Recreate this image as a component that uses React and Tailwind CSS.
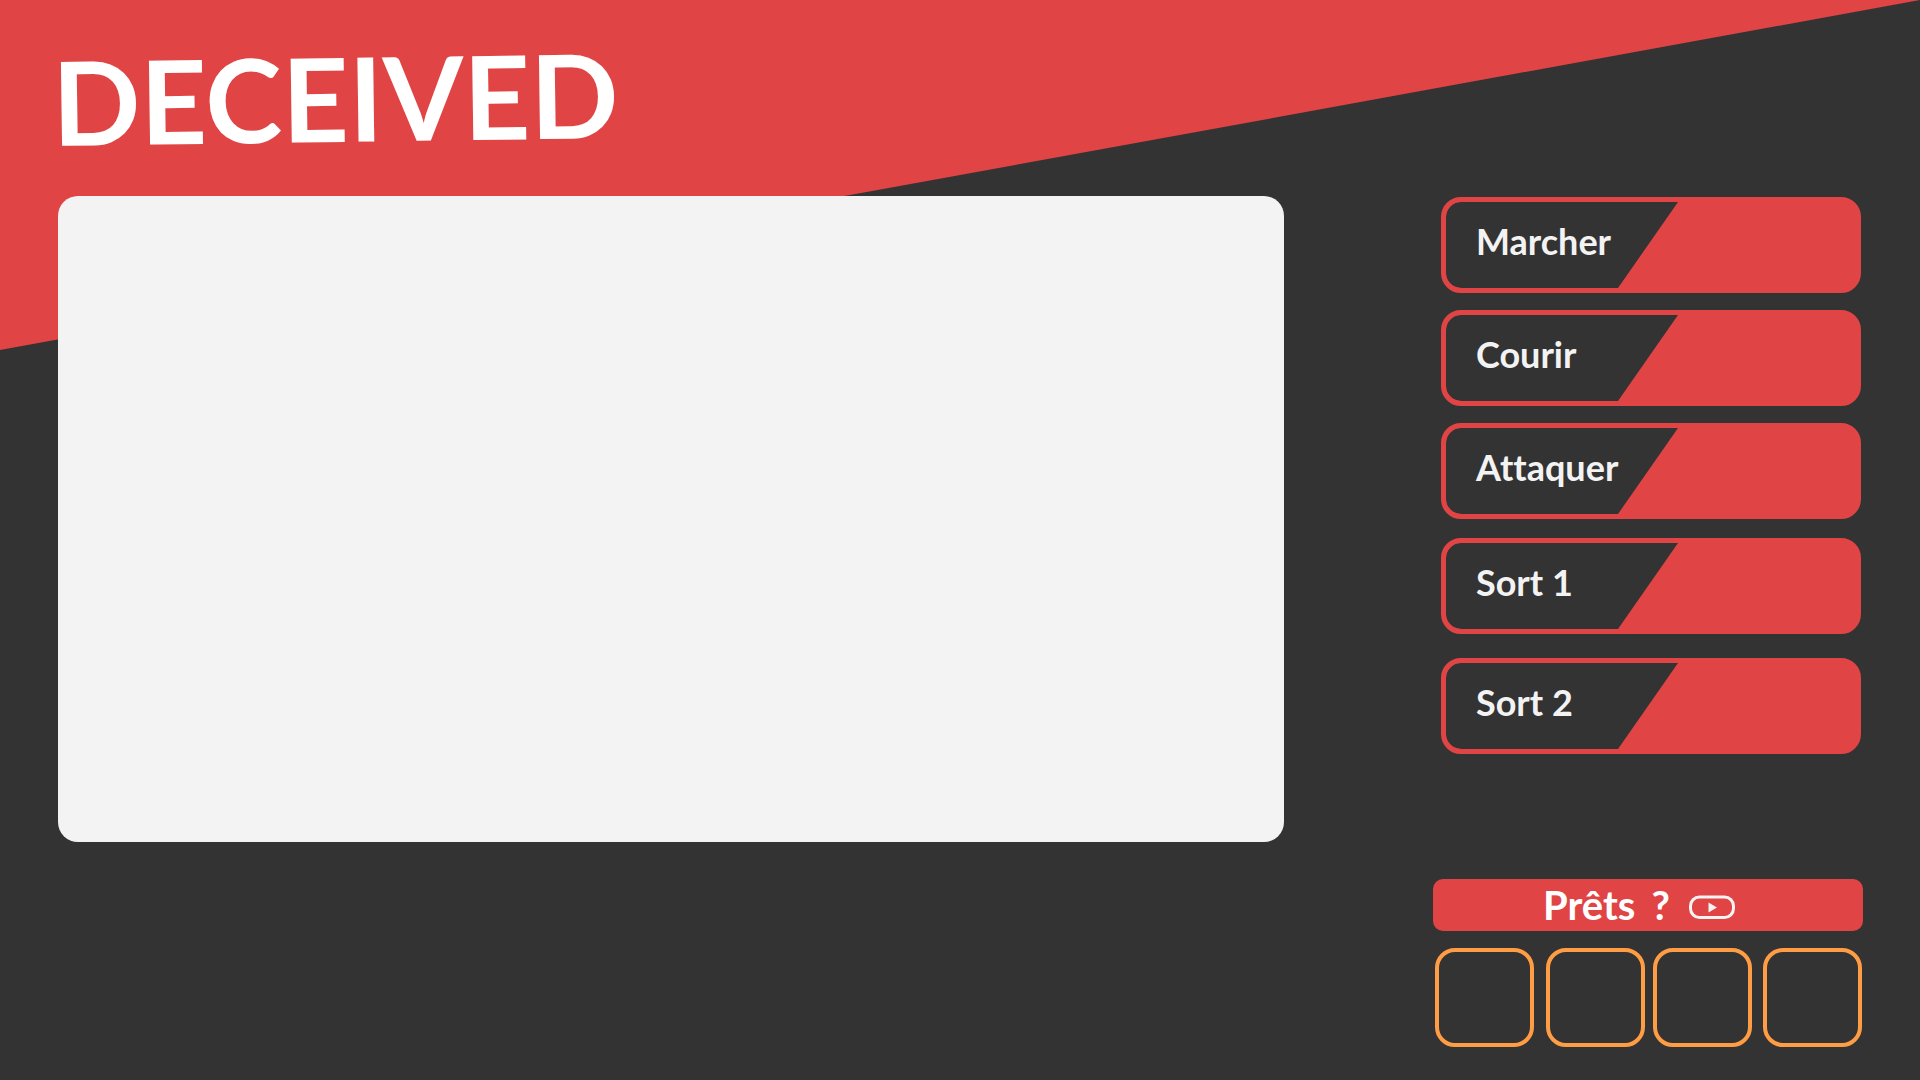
const actions = [
  { label: "Marcher", gap: "" },
  { label: "Courir", gap: "mt-[17px]" },
  { label: "Attaquer", gap: "mt-[17px]" },
  { label: "Sort 1", gap: "mt-[19px]" },
  { label: "Sort 2", gap: "mt-6" },
];

function ActionButton({ label, gap }) {
  return (
    <button
      type="button"
      className={`flex h-24 w-full overflow-hidden rounded-[20px] border-[5px] border-[#e04444] bg-[#e04444] text-left ${gap}`}
    >
      <span className="flex h-full w-[232px] items-center rounded-l-[15px] bg-[#333333] pb-2 pl-[30px] text-4xl font-bold text-[#f3f3f3] [clip-path:polygon(0_0,100%_0,172px_100%,0_100%)] [font-variant-ligatures:none]">
        {label}
      </span>
    </button>
  );
}

function PlayIcon() {
  return (
    <svg width="46" height="24" viewBox="0 0 46 24" fill="none" aria-hidden="true">
      <rect x="1.5" y="2" width="43" height="20.5" rx="9" stroke="#f3f3f3" strokeWidth="3" />
      <path d="M19.5 7.5v10l8.5-5z" fill="#f3f3f3" />
    </svg>
  );
}

function PlayerSlot({ gap }) {
  return <li className={`aspect-square flex-1 rounded-[20px] border-4 border-[#ff9d45] ${gap}`} />;
}

export default function App() {
  return (
    <div className="relative isolate min-h-screen bg-[#333333] font-['Lato',sans-serif]">
      <div className="absolute inset-x-0 top-0 -z-10 h-[350px] bg-[#e04444] [clip-path:polygon(0_0,100%_0,0_100%)]" />

      <header className="flex h-[196px] items-center pl-[52px]">
        <h1 className="rotate-[-0.8deg] text-[116px] leading-none font-bold text-white">DECEIVED</h1>
      </header>

      <div className="flex items-start gap-[149px] pr-[57px] pl-[58px]">
        <main className="aspect-[1226/646] min-w-0 flex-1 rounded-[20px] bg-[#f3f3f3]" aria-label="Plateau" />

        <aside className="w-[430px] shrink-0 pt-px">
          <nav className="flex flex-col pr-0.5 pl-2" aria-label="Actions">
            {actions.map((action) => (
              <ActionButton key={action.label} {...action} />
            ))}
          </nav>

          <button
            type="button"
            className="mt-[125px] flex h-[52px] w-full items-center rounded-[10px] bg-[#e04444] pt-1 pl-[110px] text-[40px] font-bold text-white"
          >
            <span className="flex w-[146px] gap-4 pb-1 leading-none">
              <span>Prêts</span>
              <span>?</span>
            </span>
            <PlayIcon />
          </button>

          <ul className="mt-[17px] flex pr-px pl-0.5" aria-label="Joueurs">
            <PlayerSlot gap="" />
            <PlayerSlot gap="ml-3" />
            <PlayerSlot gap="ml-2" />
            <PlayerSlot gap="ml-[11px]" />
          </ul>
        </aside>
      </div>
    </div>
  );
}
